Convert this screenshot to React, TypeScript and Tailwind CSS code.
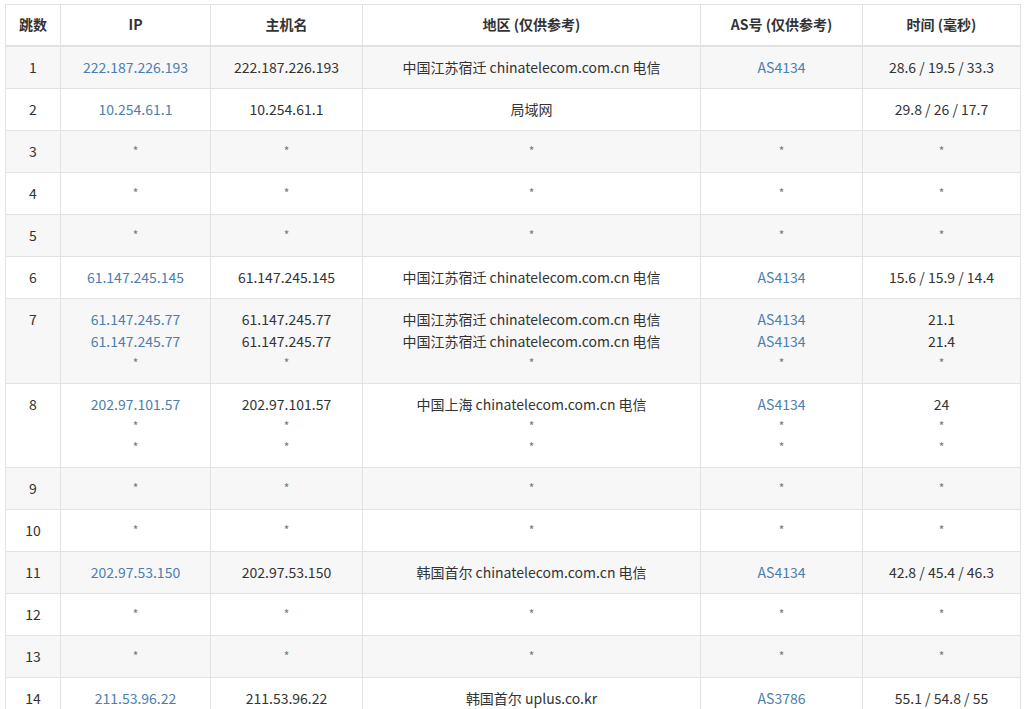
const F = '"Noto Sans CJK SC", "Open Sans", sans-serif';

type Cell = string[];
const L = (t: string) => t; 
const rows: { n: string; ip: Cell; host: Cell; loc: Cell; as: Cell; t: Cell }[] = [
  { n: "1", ip: ["222.187.226.193"], host: ["222.187.226.193"], loc: ["中国江苏宿迁 chinatelecom.com.cn 电信"], as: ["AS4134"], t: ["28.6 / 19.5 / 33.3"] },
  { n: "2", ip: ["10.254.61.1"], host: ["10.254.61.1"], loc: ["局域网"], as: [""], t: ["29.8 / 26 / 17.7"] },
  { n: "3", ip: ["*"], host: ["*"], loc: ["*"], as: ["*"], t: ["*"] },
  { n: "4", ip: ["*"], host: ["*"], loc: ["*"], as: ["*"], t: ["*"] },
  { n: "5", ip: ["*"], host: ["*"], loc: ["*"], as: ["*"], t: ["*"] },
  { n: "6", ip: ["61.147.245.145"], host: ["61.147.245.145"], loc: ["中国江苏宿迁 chinatelecom.com.cn 电信"], as: ["AS4134"], t: ["15.6 / 15.9 / 14.4"] },
  { n: "7", ip: ["61.147.245.77", "61.147.245.77", "*"], host: ["61.147.245.77", "61.147.245.77", "*"], loc: ["中国江苏宿迁 chinatelecom.com.cn 电信", "中国江苏宿迁 chinatelecom.com.cn 电信", "*"], as: ["AS4134", "AS4134", "*"], t: ["21.1", "21.4", "*"] },
  { n: "8", ip: ["202.97.101.57", "*", "*"], host: ["202.97.101.57", "*", "*"], loc: ["中国上海 chinatelecom.com.cn 电信", "*", "*"], as: ["AS4134", "*", "*"], t: ["24", "*", "*"] },
  { n: "9", ip: ["*"], host: ["*"], loc: ["*"], as: ["*"], t: ["*"] },
  { n: "10", ip: ["*"], host: ["*"], loc: ["*"], as: ["*"], t: ["*"] },
  { n: "11", ip: ["202.97.53.150"], host: ["202.97.53.150"], loc: ["韩国首尔 chinatelecom.com.cn 电信"], as: ["AS4134"], t: ["42.8 / 45.4 / 46.3"] },
  { n: "12", ip: ["*"], host: ["*"], loc: ["*"], as: ["*"], t: ["*"] },
  { n: "13", ip: ["*"], host: ["*"], loc: ["*"], as: ["*"], t: ["*"] },
  { n: "14", ip: ["211.53.96.22"], host: ["211.53.96.22"], loc: ["韩国首尔 uplus.co.kr"], as: ["AS3786"], t: ["55.1 / 54.8 / 55"] },
];
void L;

function Lines({ c, link }: { c: Cell; link?: boolean }) {
  return (
    <>
      {c.map((s, i) =>
        s === "*" ? (
          <div key={i} className="text-[#777] text-[12px] leading-[21px] h-[21px]">*</div>
        ) : (
          <div key={i} className={`h-[22px] leading-[22px] ${link ? "text-[#4a7fb0]" : "text-[#333]"}`}>{s}</div>
        )
      )}
    </>
  );
}

export default function App() {
  const td = "border border-[#e2e2e2] align-top text-center pt-[9px] pb-[10px] px-1";
  return (
    <div className="bg-white w-[1024px] h-[709px] overflow-hidden pt-[4px] pl-[5px]" style={{ fontFamily: F }}>
      <table className="border-collapse table-fixed text-[14px]" style={{ width: 1015 }}>
        <colgroup>
          <col className="w-[55px]" />
          <col className="w-[150px]" />
          <col className="w-[152px]" />
          <col className="w-[338px]" />
          <col className="w-[162px]" />
          <col className="w-[158px]" />
        </colgroup>
        <thead>
          <tr className="h-[41px]">
            {["跳数", "IP", "主机名", "地区 (仅供参考)", "AS号 (仅供参考)", "时间 (毫秒)"].map((h) => (
              <th key={h} className="border border-[#e2e2e2] border-b-2 text-center font-bold text-[#333] text-[14px]">{h}</th>
            ))}
          </tr>
        </thead>
        <tbody>
          {rows.map((r, i) => (
            <tr key={r.n} className={i % 2 === 0 ? "bg-[#f7f7f7]" : "bg-white"}>
              <td className={td}><div className="h-[22px] leading-[22px] text-[#333]">{r.n}</div></td>
              <td className={td}><Lines c={r.ip} link /></td>
              <td className={td}><Lines c={r.host} /></td>
              <td className={td}><Lines c={r.loc} /></td>
              <td className={td}><Lines c={r.as} link /></td>
              <td className={td}><Lines c={r.t} /></td>
            </tr>
          ))}
        </tbody>
      </table>
    </div>
  );
}
